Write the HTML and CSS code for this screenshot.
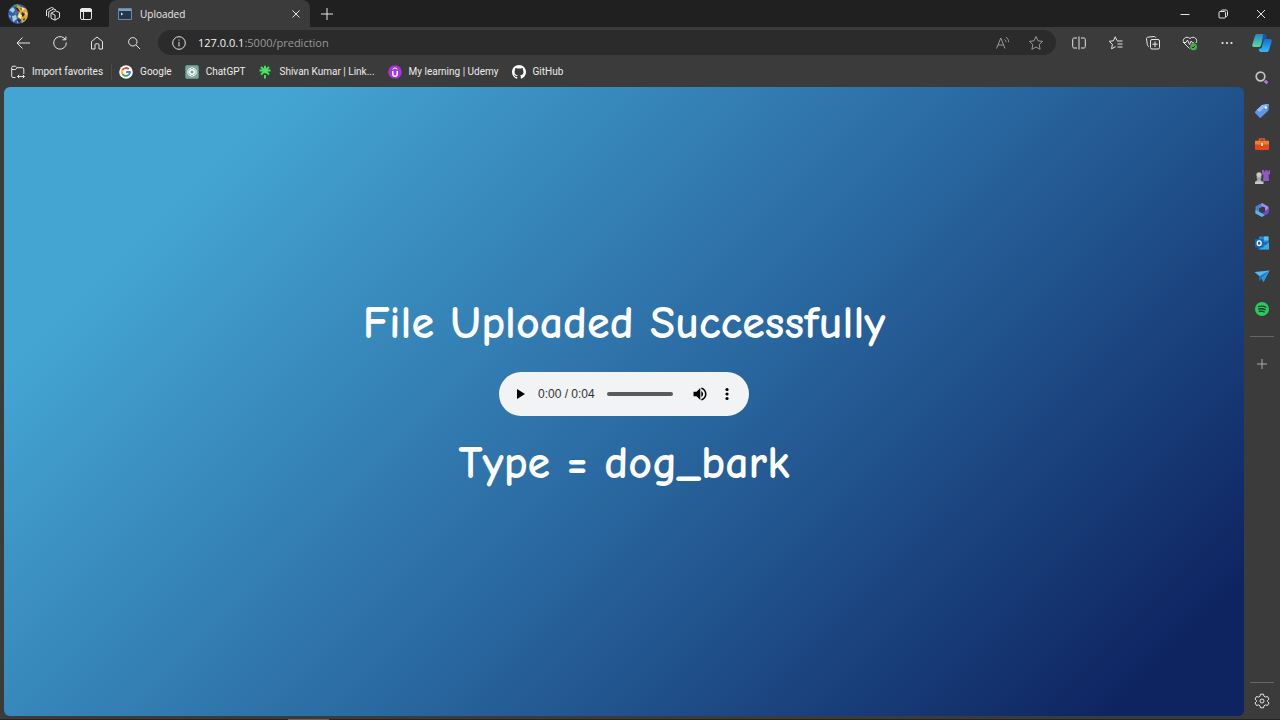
FILE: index.html
```html
<!DOCTYPE html>
<html lang="en">
<head>
<meta charset="utf-8">
<title>Uploaded</title>
<link rel="stylesheet" href="styles.css">
</head>
<body>
<div class="browser">
  <header class="titlebar">
    <div class="title-tools">
      <button class="icon-btn" aria-label="Profile"><svg class="icon-lg" viewBox="0 0 20 20"><defs><clipPath id="av"><circle cx="10" cy="10" r="10"/></clipPath></defs><g clip-path="url(#av)" stroke="none"><path fill="#315fae" d="M0 0h20v20H0z"/><path fill="#d9a93a" d="M9 0l4 3 7 2v12l-6 3-1-5-4-2 2-4-3-3z"/><path fill="#a6cce0" d="M1 6l4-3 2 3-2 3zM4 12l4-1 1 4-4 3zM1 11l2 1-1 2zM9 17l2 1-2 1z"/><path fill="#3b2a1c" d="M7 3l3 1 2 4-3-1zM14 8l3 2-2 3-2-2zM9 15l4 1-2 3zM15 15l2-1-1 3zM12 4l2 1-1 1z"/><path fill="#f8e6a8" d="M11 9l3 2-1 4-3-2zM14 3l3 2-3 2zM17 8l2 1-1 3z"/><path fill="#4e9b4a" d="M5 1l4-1 1 2-3 1zM7 8l2 1-2 2z"/></g></svg></button>
      <button class="icon-btn" aria-label="Workspaces"><svg class="icon" viewBox="0 0 16 16"><path d="M6 7.200l4.500-2.400 4 1.700v5l-4.500 2.700-4-1.900zM10 9v5M3.700 11.500V5.700L8.500 3l2.500.9M1.500 10V4.200L6.500 1.500l2.300.9M6 7.200l4 1.800"/></svg></button>
      <button class="icon-btn" aria-label="Tab actions"><svg class="icon" viewBox="0 0 16 16"><rect x="2.500" y="2.500" width="11" height="11" rx="1.500"/><path d="M5.500 5v8.500"/><path d="M2.500 3.500h11v2h-11z" fill="#eee"/></svg></button>
    </div>
    <div class="tab">
      <svg class="favicon" viewBox="0 0 14 12"><path fill="#26364b" stroke="#6689a9" d="M.5.5h13v11H.5z"/><path fill="#7aa0c4" stroke="none" d="M1 1h12v2H1z"/><path stroke="#fff" d="M3 5l1.500 1L3 7"/></svg>
      <span class="tab-title">Uploaded</span>
      <button class="icon-btn" aria-label="Close tab"><svg class="icon-sm" viewBox="0 0 12 12"><path d="M2.500 2.500l7 7M9.500 2.500l-7 7"/></svg></button>
    </div>
    <button class="icon-btn new-tab" aria-label="New tab"><svg class="icon" viewBox="0 0 16 16"><path d="M8 2v12M2 8h12"/></svg></button>
    <div class="window-tools">
      <button class="icon-btn" aria-label="Minimize"><svg class="icon-sm" viewBox="0 0 12 12"><path d="M1.500 6.500h9"/></svg></button>
      <button class="icon-btn" aria-label="Restore"><svg class="icon-sm" viewBox="0 0 12 12"><rect x="2" y="3.500" width="6.500" height="6.500" rx="1"/><path d="M4 3.500c0-1 .5-1.500 1.500-1.500H9c1 0 1.500.5 1.500 1.500V7c0 1-.5 1.500-1.500 1.500"/></svg></button>
      <button class="icon-btn" aria-label="Close"><svg class="icon-sm" viewBox="0 0 12 12"><path d="M2 2l8 8M10 2l-8 8"/></svg></button>
    </div>
  </header>

  <div class="workspace">
    <div class="main-column">
      <nav class="toolbar">
        <div class="nav-tools">
          <button class="icon-btn" aria-label="Back"><svg class="icon" viewBox="0 0 16 16"><path d="M15 8H2M7.500 2.500L2 8l5.500 5.500"/></svg></button>
          <button class="icon-btn" aria-label="Refresh"><svg class="icon" viewBox="0 0 16 16"><path d="M14.300 7.500A6.300 6.300 0 1 1 12 3l1.800 1.600M13.900 1.500v3.300h-3.400"/></svg></button>
          <button class="icon-btn" aria-label="Home"><svg class="icon" viewBox="0 0 16 16"><path d="M2.500 6.500L8 2l5.500 4.500V14H10V9.800c0-.6-.3-1-1-1H7c-.7 0-1 .4-1 1V14H2.500z"/></svg></button>
          <button class="icon-btn" aria-label="Search"><svg class="icon" viewBox="0 0 16 16"><circle cx="6.800" cy="6.800" r="4.200"/><path d="M10 10l4 4"/></svg></button>
        </div>
        <div class="address">
          <button class="icon-btn" aria-label="Site information"><svg class="icon" viewBox="0 0 16 16"><circle cx="8" cy="8" r="6.300"/><path d="M8 7v4.500M8 4.500v1.200"/></svg></button>
          <a class="url" href="#"><span class="host">127.0.0.1</span>:5000/prediction</a>
          <button class="icon-btn dim" aria-label="Read aloud"><svg class="icon" viewBox="0 0 16 16"><path d="M1.500 13.500L5.800 3 10 13.500M3 10h5.600M9.500 4.500c1 .7 1.500 1.600 1.500 2.800M11 2.200c1.800 1.200 2.700 2.900 2.700 5"/></svg></button>
          <button class="icon-btn dim" aria-label="Add to favorites"><svg class="icon" viewBox="0 0 16 16"><path d="M8 1.500l2 4.300 4.600.6-3.400 3.200.9 4.700L8 12l-4.100 2.300.9-4.700L1.400 6.400 6 5.800z"/></svg></button>
        </div>
        <div class="action-tools">
          <button class="icon-btn" aria-label="Split screen"><svg class="icon" viewBox="0 0 16 16"><path d="M6 3H3.200C2.200 3 1.700 3.500 1.700 4.500v7c0 1 .5 1.500 1.500 1.500H6M10 3h2.800c1 0 1.500.5 1.500 1.500v7c0 1-.5 1.500-1.500 1.500H10M8 1.500v13"/></svg></button>
          <button class="icon-btn" aria-label="Favorites"><svg class="icon" viewBox="0 0 16 16"><path d="M9 5.500L7.200 1.800 5.400 5.800l-4.200.5 3.200 3-.8 4.500 4-2.200M9 6h5.500M9.500 9h5M9.500 12h5"/></svg></button>
          <button class="icon-btn" aria-label="Collections"><svg class="icon" viewBox="0 0 16 16"><rect x="5.500" y="4.500" width="9" height="9.500" rx="1.500"/><path d="M10 6.500v5.500M7.300 9.200h5.400M4 11.500C2.800 11.300 2.500 10.500 2.300 9.500L1.500 4c-.1-1 .3-1.600 1.200-1.800L9 1.500c1 0 1.500.3 1.800 1.300"/></svg></button>
          <button class="icon-btn" aria-label="Browser essentials"><svg class="icon" viewBox="0 0 16 16"><path d="M7.500 13.500L2 8C-.5 4.500 4 0 8 3.500c4-3.500 8.500 1 6 4.500M1 7.500h3l1.500-2.500 2 4.500L9.200 6l1.300 1.800H12"/><circle cx="11.500" cy="11.800" r="3.500" fill="#4bab50" stroke="none"/><path d="M9.800 11.800l1.200 1.200 2.200-2.200" stroke="#173d18"/></svg></button>
          <button class="icon-btn" aria-label="Settings and more"><svg class="icon" viewBox="0 0 16 16"><g fill="#eee" stroke="none"><circle cx="3.500" cy="8" r="1.100"/><circle cx="8" cy="8" r="1.100"/><circle cx="12.500" cy="8" r="1.100"/></g></svg></button>
        </div>
      </nav>

      <nav class="bookmarks">
        <a class="bookmark import" href="#"><svg class="icon-md" viewBox="0 0 14 14"><path d="M4.500 12.500H2c-.8 0-1.300-.5-1.300-1.300V2.500c0-.8.5-1.300 1.300-1.300h2.500l1.500 1.500h5.500c.8 0 1.300.5 1.300 1.300V9M1 4.500h3.500L6 2.800M6.500 11.500h7M8.200 9.800l-1.700 1.700 1.700 1.700M11.800 9.800l1.700 1.700-1.700 1.700"/></svg>Import favorites</a>
        <a class="bookmark" href="#"><svg class="icon-md" viewBox="0 0 14 14"><circle cx="7" cy="7" r="6.800" fill="#fff" stroke="none"/><g stroke-width="1.800"><path stroke="#e24b3c" d="M3.500 5A4 4 0 0 1 9.800 4.200"/><path stroke="#edb62c" d="M3.500 5a4 4 0 0 0 0 4"/><path stroke="#38a455" d="M3.500 9a4 4 0 0 0 6 1"/><path stroke="#427fe5" d="M9.500 10A4 4 0 0 0 11 7H7.200"/></g></svg>Google</a>
        <a class="bookmark" href="#"><svg class="icon-md" viewBox="0 0 14 14"><rect x=".3" y=".3" width="13.400" height="13.400" rx="1.500" fill="#74aa9c" stroke="none"/><g fill="none" stroke="#fff" stroke-width=".8"><rect x="5" y="2.500" width="4" height="7" rx="2"/><rect x="5" y="2.500" width="4" height="7" rx="2" transform="rotate(60 7 7)"/><rect x="5" y="2.500" width="4" height="7" rx="2" transform="rotate(120 7 7)"/><rect x="5" y="2.500" width="4" height="7" rx="2" transform="rotate(180 7 7)"/><rect x="5" y="2.500" width="4" height="7" rx="2" transform="rotate(240 7 7)"/><rect x="5" y="2.500" width="4" height="7" rx="2" transform="rotate(300 7 7)"/></g></svg>ChatGPT</a>
        <a class="bookmark" href="#"><svg class="icon-md" viewBox="0 0 14 14"><path stroke="#43e660" stroke-width="1.900" d="M7 .8v7.500M7 10v3.500M1.500 5.500h11M3 2l8 7.500M11 2L3 9.500"/></svg>Shivan Kumar | Link...</a>
        <a class="bookmark" href="#"><svg class="icon-md" viewBox="0 0 14 14"><circle cx="7" cy="7" r="6.800" fill="#a435df" stroke="none"/><path stroke="#fff" stroke-width="1.500" d="M4.800 6v3c0 3 4.400 3 4.400 0V6"/><path stroke="#fff" d="M4.500 4.300L7 2.800l2.500 1.500"/></svg>My learning | Udemy</a>
        <a class="bookmark" href="#"><svg class="icon-md" viewBox="0 0 16 16"><path fill="#fff" stroke="none" d="M8 0C3.580 0 0 3.580 0 8c0 3.540 2.290 6.530 5.470 7.590.4.070.55-.17.55-.38v-1.490c-2.010.37-2.530-.49-2.690-.94-.09-.23-.48-.94-.82-1.130-.28-.15-.68-.52-.01-.53.63-.01 1.080.58 1.230.82.72 1.210 1.870.87 2.330.66.070-.52.280-.87.510-1.070-1.780-.2-3.640-.89-3.640-3.950 0-.87.310-1.590.82-2.150-.08-.2-.36-1.020.08-2.120 0 0 .67-.21 2.200.82a7.600 7.600 0 0 1 4 0c1.530-1.040 2.200-.82 2.200-.82.440 1.100.160 1.920.080 2.120.510.560.820 1.270.820 2.150 0 3.070-1.870 3.750-3.650 3.950.290.250.540.730.540 1.480v2.200c0 .210.150.460.550.380A8.010 8.010 0 0 0 16 8c0-4.420-3.580-8-8-8z"/></svg>GitHub</a>
      </nav>

      <main class="page">
        <h1 class="headline">File Uploaded Successfully</h1>
        <div class="player">
          <button class="player-btn play" aria-label="Play"><svg class="icon" viewBox="0 0 16 16"><path d="M4 3v10l8-5z"/></svg></button>
          <span class="time">0:00 / 0:04</span>
          <input class="seek" type="range" min="0" max="4" value="0" aria-label="Seek">
          <button class="player-btn" aria-label="Mute"><svg class="icon" viewBox="0 0 16 16"><path d="M1.500 5.700v4.600h3L8.300 14V2L4.500 5.700zM9.300 5v6c1-.5 1.800-1.700 1.800-3s-.8-2.500-1.800-3zM9.300 1.500V3c2.200.6 3.700 2.600 3.700 5s-1.500 4.400-3.700 5v1.500c3-.7 5.200-3.300 5.200-6.500S12.300 2.200 9.300 1.500z"/></svg></button>
          <button class="player-btn" aria-label="More options"><svg class="icon" viewBox="0 0 16 16"><circle cx="8" cy="3.500" r="1.600"/><circle cx="8" cy="8" r="1.600"/><circle cx="8" cy="12.500" r="1.600"/></svg></button>
        </div>
        <h1 class="headline">Type = dog_bark</h1>
      </main>
    </div>

    <aside class="sidebar">
      <button class="icon-btn" aria-label="Copilot"><svg class="icon-lg" viewBox="0 0 20 20"><defs><linearGradient id="cpa" x1="0" y1="0" x2="0" y2="1"><stop offset="0" stop-color="#2586cf"/><stop offset="1" stop-color="#5bdc9c"/></linearGradient><linearGradient id="cpb" x1="0" y1="0" x2="0" y2="1"><stop offset="0" stop-color="#176fcf"/><stop offset="1" stop-color="#35b8f6"/></linearGradient></defs><g stroke="none"><path fill="url(#cpa)" d="M5 1h7c1.500 0 1.500 1 2 3l-3 1-2 7c-.5 1.500-1 2-2.500 2H2C0 14 0 12.500.5 11L3 3c.4-1.300 1-2 2-2z"/><path fill="url(#cpb)" d="M13 6h5c2 0 2 1.500 1.500 3L17 17c-.4 1.300-1 2-2 2H9c-1.500 0-2-1-2.300-3l2.800-1 2-7c.3-1.300.7-2 1.500-2z"/><path fill="#1b55a9" d="M11 1h1.500C14 1 14 2 14.500 6H12l-2 4z"/></g></svg></button>
      <button class="icon-btn" aria-label="Search sidebar"><svg class="icon" viewBox="0 0 16 16"><circle cx="6.500" cy="6.500" r="4.300" stroke="#c5c5c5" stroke-width="1.700"/><path stroke="#b17be3" stroke-width="2.800" d="M10.800 10.800l2.500 2.500"/></svg></button>
      <button class="icon-btn" aria-label="Shopping"><svg class="icon" viewBox="0 0 16 16"><g stroke="none"><path fill="#5e95e4" d="M8 2l6-1c.8 0 1 .2 1 1l-.6 5.500L7 14.500c-.6.5-1 .5-1.500 0L1.200 10c-.5-.6-.4-1 0-1.500z"/><path fill="#8db9f3" d="M8 2l6-1-8 8-3.500-2z"/><circle cx="11.800" cy="4.500" r="1.200" fill="#fff"/></g></svg></button>
      <button class="icon-btn" aria-label="Tools"><svg class="icon" viewBox="0 0 16 16"><path stroke="#dc5b2b" stroke-width="1.500" d="M5.500 5V3h5v2"/><g stroke="none"><rect x="1" y="4.500" width="14" height="9.500" rx="1" fill="#e04a1c"/><path fill="#f57a35" d="M1 5h14v3.500H1z"/><path fill="#ffe1a0" d="M7 7h2v3H7z"/></g></svg></button>
      <button class="icon-btn" aria-label="Games"><svg class="icon" viewBox="0 0 16 16"><g stroke="none"><path fill="#9257c9" d="M8 1h2v1.500h1.500V1h2v1.500H15V1h1v4l-1.500 1 .5 6H9l.5-6L8 5z"/><circle cx="5" cy="5.800" r="2.600" fill="#c8c8c8"/><path fill="#a7a7a7" d="M2.500 8h5v1.200l-1 .5L8 13H2l1.500-3.300-1-.5z"/><path fill="#c8c8c8" d="M1 12.500h8.500V15H1z"/></g></svg></button>
      <button class="icon-btn" aria-label="Microsoft 365"><svg class="icon" viewBox="0 0 16 16"><g stroke="none"><path fill="#4c7fd6" d="M8 1L1.500 4.500v7L5 10V6.500L10.500 3.500z"/><path fill="#a78af0" d="M8 1l6.500 3.800v5L11 8.500V5.500L7 3.800z"/><path fill="#6a4ad0" d="M14.500 6v5.500L8 15l-2.500-2L11 9.500z"/><path fill="#59b6ea" d="M1.500 8v3.500L8 15l2.500-2L5 9.500z"/></g></svg></button>
      <button class="icon-btn" aria-label="Outlook"><svg class="icon" viewBox="0 0 16 16"><g stroke="none"><path fill="#248ad4" d="M5 1.500h9.500V8H5z"/><path fill="#55c3f1" d="M10 1.500h4.500v4H10z"/><path fill="#1b68b3" d="M4 8l11-1v7.500H4z"/><path fill="#39aae4" d="M15 7.500v7H5z"/><rect x="1" y="4" width="8.500" height="8.500" rx="1" fill="#1068b8"/></g><ellipse cx="5.200" cy="8.200" rx="2" ry="2.300" stroke="#fff" stroke-width="1.300"/></svg></button>
      <button class="icon-btn" aria-label="Drop"><svg class="icon" viewBox="0 0 16 16"><g stroke="none"><path fill="#53b9ef" d="M.5 4l15-1.500L9.500 14 7 9.500z"/><path fill="#1d75bf" d="M15.500 2.500L5 8.500v5L7.500 10z"/><path fill="#2b91da" d="M15.500 2.500l-8 7.500 2 4z"/></g></svg></button>
      <button class="icon-btn" aria-label="Spotify"><svg class="icon" viewBox="0 0 16 16"><circle cx="8" cy="8" r="7" fill="#27cc61" stroke="none"/><path stroke="#173a22" stroke-width="1.300" d="M3.800 5.800c3-1 6-.7 8.600.7M4.300 8.200c2.500-.8 5-.5 7.300.7M4.700 10.500c2.200-.6 4.200-.3 6 .7"/></svg></button>
      <hr class="rule">
      <button class="icon-btn" aria-label="Customize"><svg class="icon" viewBox="0 0 16 16"><path stroke="#aaa" d="M8 3v10M3 8h10"/></svg></button>
      <hr class="rule bottom-rule">
      <button class="icon-btn" aria-label="Settings"><svg class="icon" viewBox="0 0 16 16"><path d="M6.500 1.200h3l.5 2 1.500.9 2-.6L15 6.100 13.500 7.500v1L15 9.900l-1.500 2.600-2-.6-1.500.9-.5 2h-3l-.5-2-1.500-.9-2 .6L1 9.900l1.500-1.400v-1L1 6.100l1.500-2.600 2 .6L6 3.200z"/><circle cx="8" cy="8" r="2"/></svg></button>
    </aside>
  </div>
  <footer class="edge"><span class="edge-mark"></span></footer>
</div>
</body>
</html>
```

FILE: styles.css
```css
* { box-sizing: border-box; }

body {
  margin: 0;
  background: #3b3b3b;
  color: #ececec;
  font: 10px/16px "Open Sans", "Noto Sans", sans-serif;
}

button {
  padding: 0;
  border: 0;
  background: none;
  color: inherit;
}

a { color: inherit; text-decoration: none; }

svg {
  display: block;
  flex: none;
  fill: none;
  stroke: #e6e6e6;
  stroke-linejoin: round;
}

.icon { width: 16px; height: 16px; }
.icon-sm { width: 12px; height: 12px; }
.icon-md { width: 14px; height: 14px; }
.icon-lg { width: 20px; height: 20px; }

.icon-btn {
  display: flex;
  flex: none;
  align-items: center;
  justify-content: center;
}

.dim svg { stroke: #999; }

.browser {
  display: flex;
  flex-direction: column;
  min-height: 100vh;
}

.titlebar {
  display: flex;
  align-items: stretch;
  height: 27px;
  background: #202020;
}

.title-tools {
  display: flex;
  align-items: center;
  gap: 17px;
  width: 109px;
  padding-left: 8px;
}

.tab {
  display: flex;
  align-items: center;
  width: 201px;
  padding: 0 8px 0 9px;
  border-radius: 8px 8px 0 0;
  background: #3b3b3b;
}

.favicon { width: 14px; height: 12px; }
.tab-title { flex: 1; margin-left: 8px; }
.new-tab { margin-left: 9px; }

.window-tools {
  display: flex;
  gap: 26px;
  margin-left: auto;
  padding-right: 13px;
}

.workspace { display: flex; flex: 1; }

.main-column {
  display: flex;
  flex: 1;
  flex-direction: column;
  min-width: 0;
}

.toolbar {
  display: flex;
  align-items: center;
  height: 31px;
  padding: 0 9px 0 15px;
}

.nav-tools, .action-tools { display: flex; gap: 21px; }

.address {
  display: flex;
  flex: 1;
  align-items: center;
  gap: 17px;
  height: 25px;
  margin: 0 15px 0 16px;
  padding: 0 12px 0 13px;
  border-radius: 13px;
  background: #2b2b2b;
}

.url {
  flex: 1;
  margin-left: -6px;
  color: #999;
  font-size: 11px;
}

.host { color: #f4f4f4; }

.bookmarks {
  display: flex;
  align-items: center;
  gap: 13px;
  height: 29px;
  padding: 0 0 1px 11px;
  font-family: Roboto, sans-serif;
}

.bookmark {
  display: flex;
  align-items: center;
  gap: 7px;
  white-space: nowrap;
}

.import {
  margin-right: -6px;
  padding-right: 8px;
  border-right: 1px solid #4b4b4b;
}

.page {
  display: flex;
  flex: 1;
  flex-direction: column;
  align-items: center;
  justify-content: center;
  margin-left: 4px;
  padding-bottom: 16px;
  border-radius: 6px;
  background: linear-gradient(135deg, #44a5d3 15%, #2a69a1 53%, #0e2461 93%);
}

.headline {
  margin: 0;
  color: #fff;
  font: 700 46px/60px "Comic Neue", "Comic Sans MS", "Open Sans", sans-serif;
}

.player {
  display: flex;
  align-items: center;
  width: 250px;
  height: 44px;
  margin: 18px 0;
  padding: 0 14px;
  border-radius: 22px;
  background: #f1f3f4;
  color: #333;
}

.player svg { fill: #000; stroke: none; }

.player-btn { margin-left: 11px; }

.play { margin-left: 0; }

.time {
  margin: 0 12px 0 9px;
  font: 12px/16px "Liberation Sans", Arial, sans-serif;
  white-space: nowrap;
}

.seek {
  flex: 1;
  min-width: 0;
  height: 4px;
  margin: 0 8px 0 0;
  border-radius: 2px;
  background: #5a5a5a;
  appearance: none;
}

.seek::-webkit-slider-thumb { width: 0; height: 0; appearance: none; }

.sidebar {
  display: flex;
  flex-direction: column;
  align-items: center;
  width: 36px;
  padding: 6px 0 7px;
  gap: 17px;
}

.rule {
  width: 24px;
  height: 1px;
  margin: 2px 0;
  border: 0;
  background: #666;
}

.bottom-rule { margin: auto 0 -7px; }

.edge {
  display: flex;
  align-items: flex-end;
  height: 4px;
}

.edge::before, .edge::after {
  height: 1px;
  background: #242424;
  content: "";
}

.edge::before { width: 288px; }
.edge::after { flex: 1; }

.edge-mark { width: 41px; height: 1px; background: #666; }
```
